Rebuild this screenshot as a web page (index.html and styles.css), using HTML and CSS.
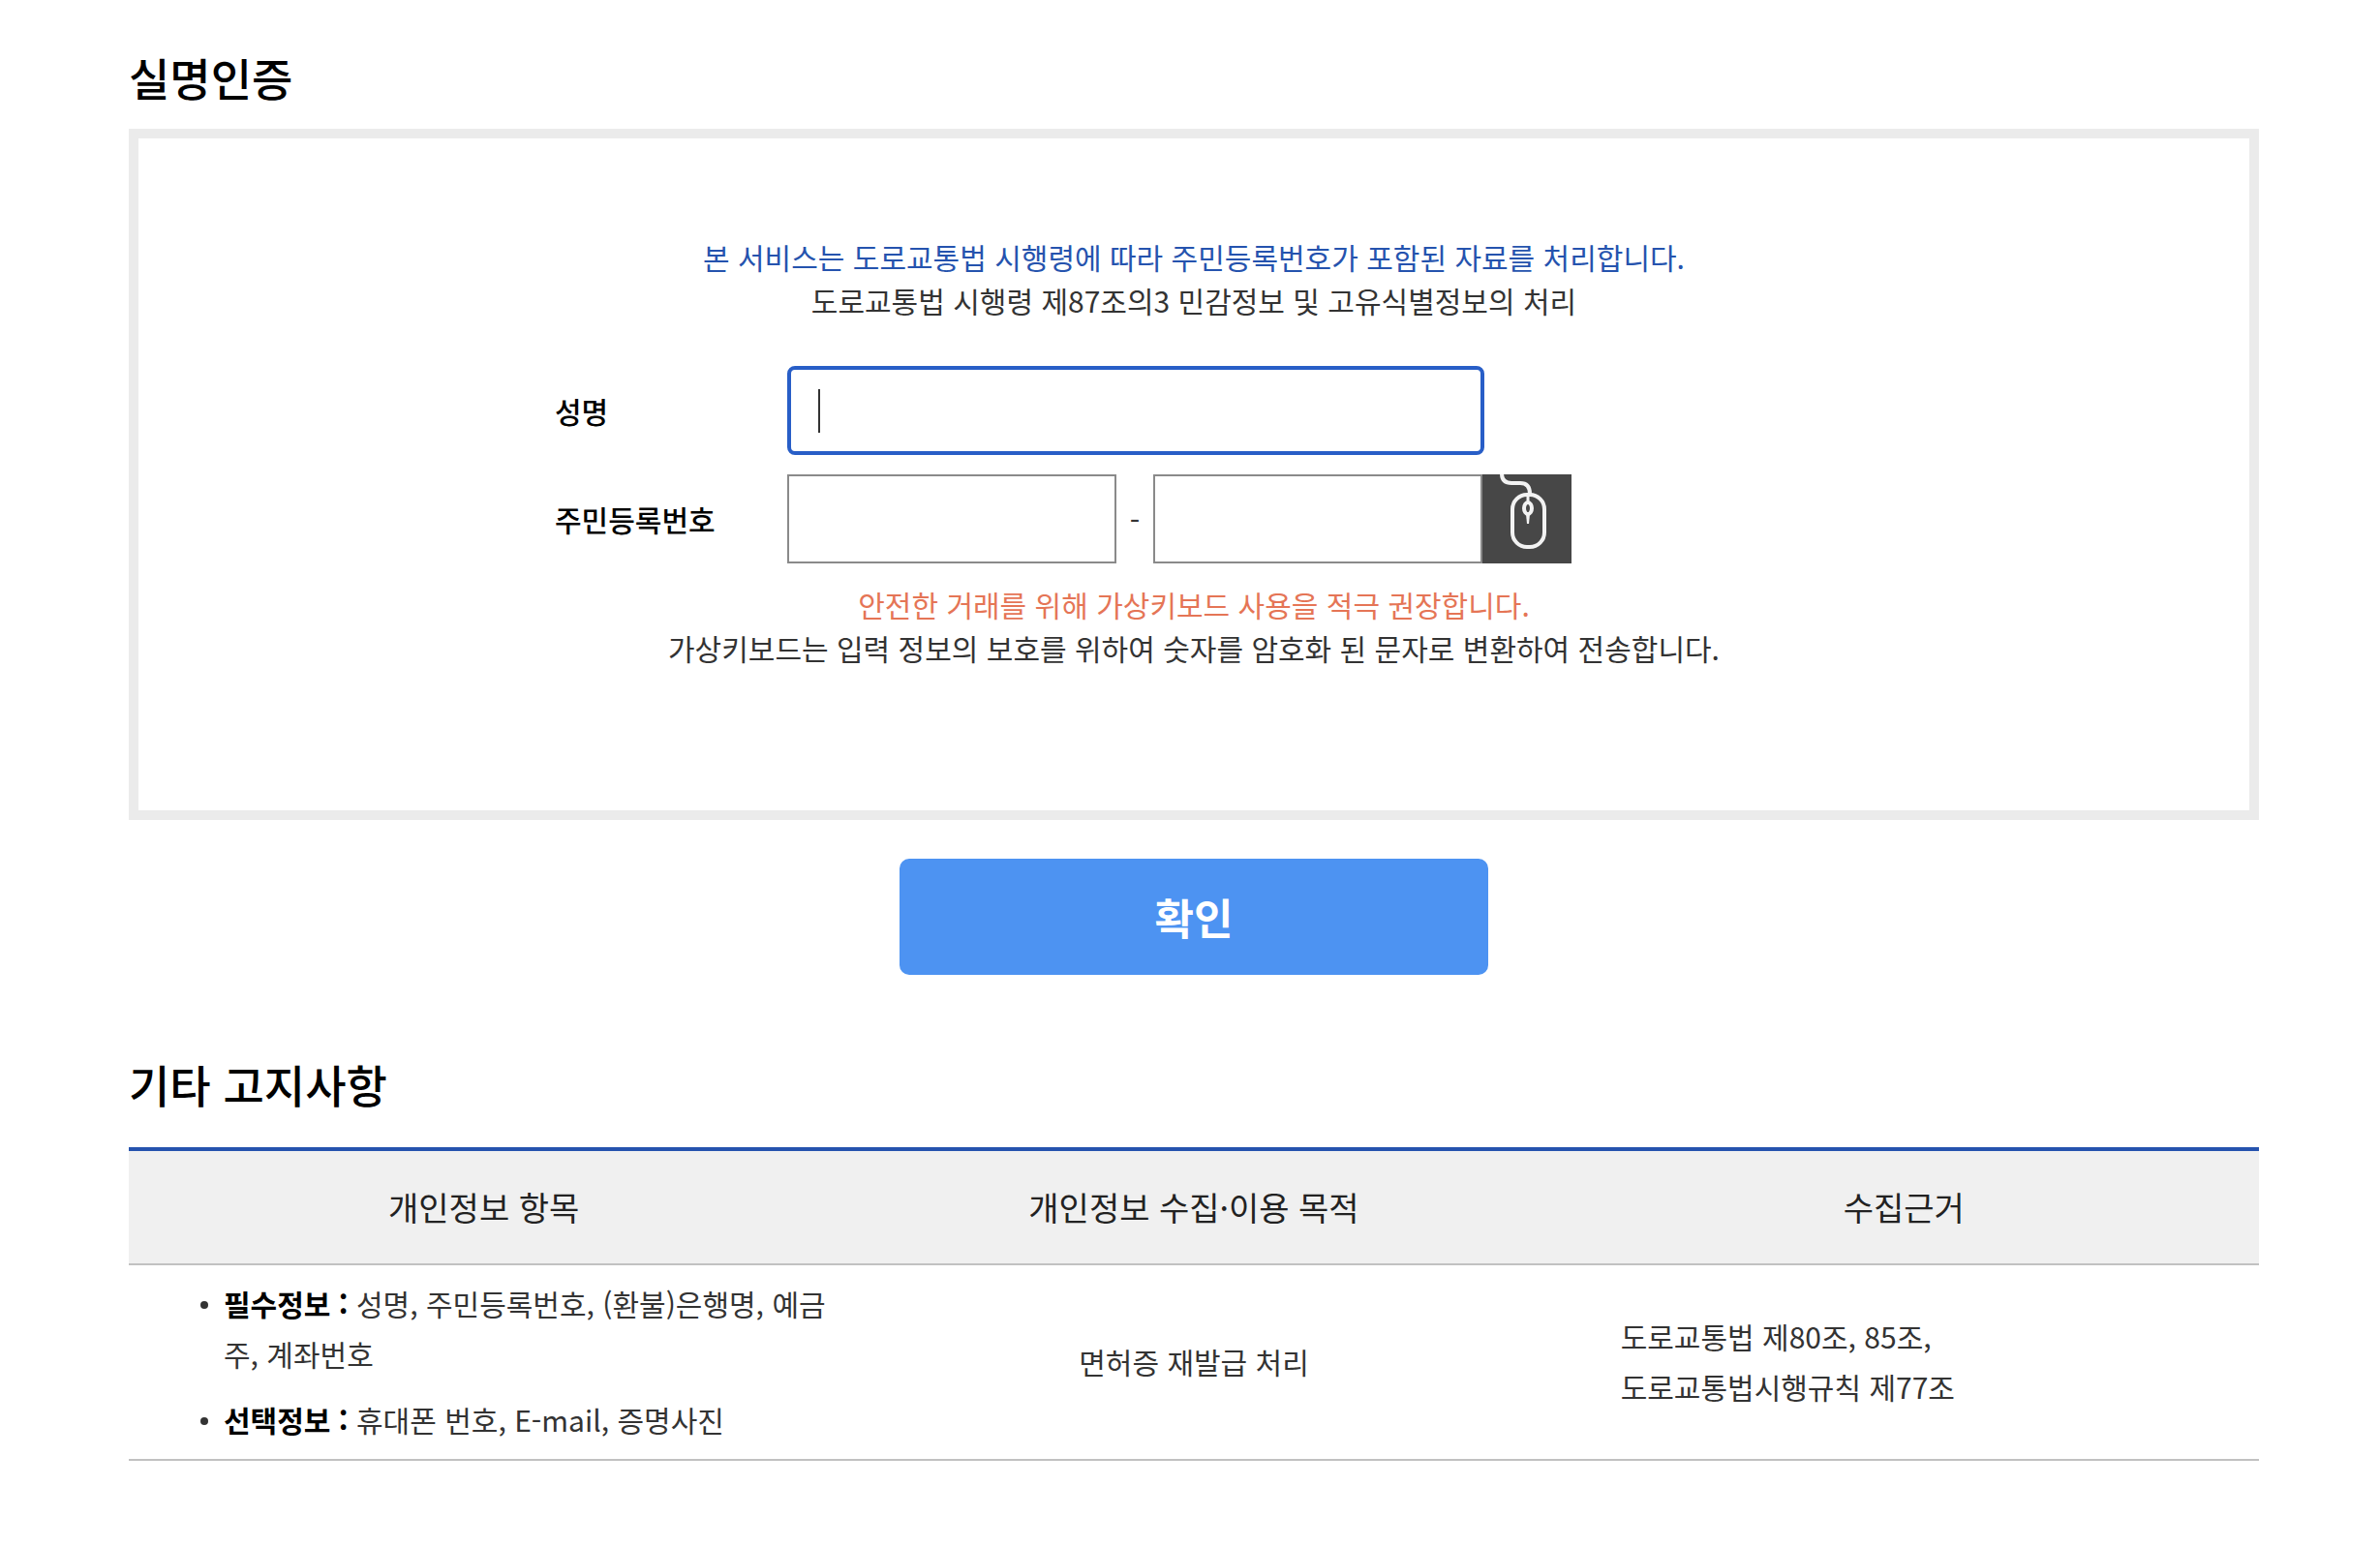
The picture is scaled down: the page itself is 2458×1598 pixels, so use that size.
FILE: index.html
```html
<!DOCTYPE html>
<html lang="ko">

<head>
    <meta charset="UTF-8" />
    <meta name="viewport" content="width=device-width, initial-scale=1.0" />
    <title>실명인증</title>
    <link rel="stylesheet" href="styles.css">
</head>

<body>
    <main class="container">
        <form class="auth-form">
            <h2 class="title">실명인증</h2>
            <div class="auth-box">
                <div class="guide">
                    <p class="point-blue">본 서비스는 도로교통법 시행령에 따라 주민등록번호가 포함된 자료를 처리합니다.</p>
                    <p>도로교통법 시행령 제87조의3 민감정보 및 고유식별정보의 처리</p>
                </div>

                <div class="fields">
                    <div class="row">
                        <label for="user-name">성명</label>
                        <input type="text" id="user-name" class="name-input" placeholder=" " autocomplete="off" autofocus />
                    </div>
                    <div class="row">
                        <label for="jumin1">주민등록번호</label>
                        <input type="text" id="jumin1" class="jumin-input" maxlength="6" />
                        <span class="dash">-</span>
                        <input type="password" id="jumin2" class="jumin-input" maxlength="7" aria-label="주민등록번호 뒷자리" />
                        <button type="button" class="keypad-btn" aria-label="가상키보드">
                            <svg viewBox="0 0 92 92" fill="none" stroke="#f2f2f2" stroke-width="4">
                                <path d="M20 -1C20 5 23 9 30 9H39C46 9 49 13 49 20" />
                                <rect x="31" y="21" width="33" height="54" rx="15" />
                                <path d="M47 20V30" stroke-width="3" />
                                <ellipse cx="47" cy="35" rx="4" ry="6" stroke-width="4" />
                                <path d="M45 41H49L48 51H46Z" fill="#f2f2f2" stroke="none" />
                            </svg>
                        </button>
                    </div>
                </div>

                <div class="guide">
                    <p class="point-red">안전한 거래를 위해 가상키보드 사용을 적극 권장합니다.</p>
                    <p>가상키보드는 입력 정보의 보호를 위하여 숫자를 암호화 된 문자로 변환하여 전송합니다.</p>
                </div>
            </div>
            <button type="button" class="confirm-btn">확인</button>
        </form>

        <section class="notice">
            <h2 class="title">기타 고지사항</h2>
            <table class="notice-table">
                <thead>
                    <tr>
                        <th scope="col">개인정보 항목</th>
                        <th scope="col">개인정보 수집·이용 목적</th>
                        <th scope="col">수집근거</th>
                    </tr>
                </thead>
                <tbody>
                    <tr>
                        <td class="left">
                            <ul class="info-list">
                                <li><strong>필수정보 :</strong> 성명, 주민등록번호, (환불)은행명, 예금주, 계좌번호</li>
                                <li><strong>선택정보 :</strong> 휴대폰 번호, E-mail, 증명사진</li>
                            </ul>
                        </td>
                        <td>면허증 재발급 처리</td>
                        <td class="left">도로교통법 제80조, 85조,<br>도로교통법시행규칙 제77조</td>
                    </tr>
                </tbody>
            </table>
        </section>
    </main>
</body>

</html>
```

FILE: styles.css
```css
* {
    box-sizing: border-box;
}

body {
    margin: 0;
    font-family: "Noto Sans CJK KR", sans-serif;
    font-size: 30px;
    line-height: 45px;
    color: #333;
    background-color: #fff;
}

.container {
    padding: 45px 125px 80px 133px;
}

.title {
    margin: 0;
    font-size: 46px;
    font-weight: 500;
    line-height: 68px;
    color: #000;
}

.auth-box {
    margin-top: 20px;
    padding: 100px 0 145px;
    border: 10px solid #ebebeb;
}

.guide {
    text-align: center;
}

.guide p {
    margin: 0;
}

.point-blue {
    color: #2553ae;
}

.point-red {
    color: #e57556;
}

.fields {
    display: flex;
    flex-direction: column;
    gap: 20px;
    max-width: 1320px;
    margin: 45px auto 20px;
}

.row {
    display: flex;
    align-items: center;
}

.row label {
    width: 240px;
    font-weight: 500;
    color: #000;
}

.row input {
    height: 92px;
    padding: 0 30px;
    border: 2px solid #8a8a8a;
    border-radius: 0;
    font: inherit;
    color: #333;
    background-color: #fff;
}

.row .name-input {
    width: 720px;
}

.row .name-input:focus {
    padding: 0 28px;
    border: 4px solid #285ec7;
    border-radius: 8px;
    outline: none;
}

/* 2px wide caret while the field is empty */
.row .name-input:focus:placeholder-shown {
    caret-color: transparent;
    background: linear-gradient(#333, #333) 28px 50% / 2px 45px no-repeat #fff;
}

.row .jumin-input {
    width: 340px;
}

.dash {
    width: 38px;
    text-align: center;
}

.keypad-btn {
    width: 92px;
    height: 92px;
    padding: 0;
    border: none;
    background-color: #474747;
    cursor: pointer;
}

.keypad-btn svg {
    display: block;
}

.confirm-btn {
    display: block;
    width: 608px;
    height: 120px;
    margin: 40px auto 0;
    border: none;
    border-radius: 10px;
    font-family: inherit;
    font-size: 44px;
    font-weight: 700;
    color: #fff;
    background-color: #4d93f2;
    cursor: pointer;
}

.notice {
    margin-top: 78px;
}

.notice-table {
    width: 100%;
    margin-top: 32px;
    border-top: 4px solid #2553ae;
    border-spacing: 0;
    table-layout: fixed;
}

.notice-table th {
    height: 118px;
    padding: 0 0 2px;
    border-bottom: 2px solid #c1c1c1;
    font-size: 34px;
    font-weight: 400;
    color: #222;
    background-color: #f0f0f0;
}

.notice-table td {
    padding: 13px 20px 15px;
    border-bottom: 2px solid #c1c1c1;
    line-height: 52px;
    text-align: center;
}

.notice-table .left {
    padding-left: 74px;
    padding-right: 0;
    text-align: left;
}

.info-list {
    margin: 0;
    padding: 0;
    list-style: none;
}

.info-list li {
    position: relative;
    padding-left: 24px;
}

.info-list li + li {
    margin-top: 16px;
}

.info-list li::before {
    content: "";
    position: absolute;
    top: 24px;
    left: 0;
    width: 8px;
    height: 8px;
    border-radius: 50%;
    background-color: #333;
}

.info-list strong {
    font-weight: 700;
    color: #000;
}
```
